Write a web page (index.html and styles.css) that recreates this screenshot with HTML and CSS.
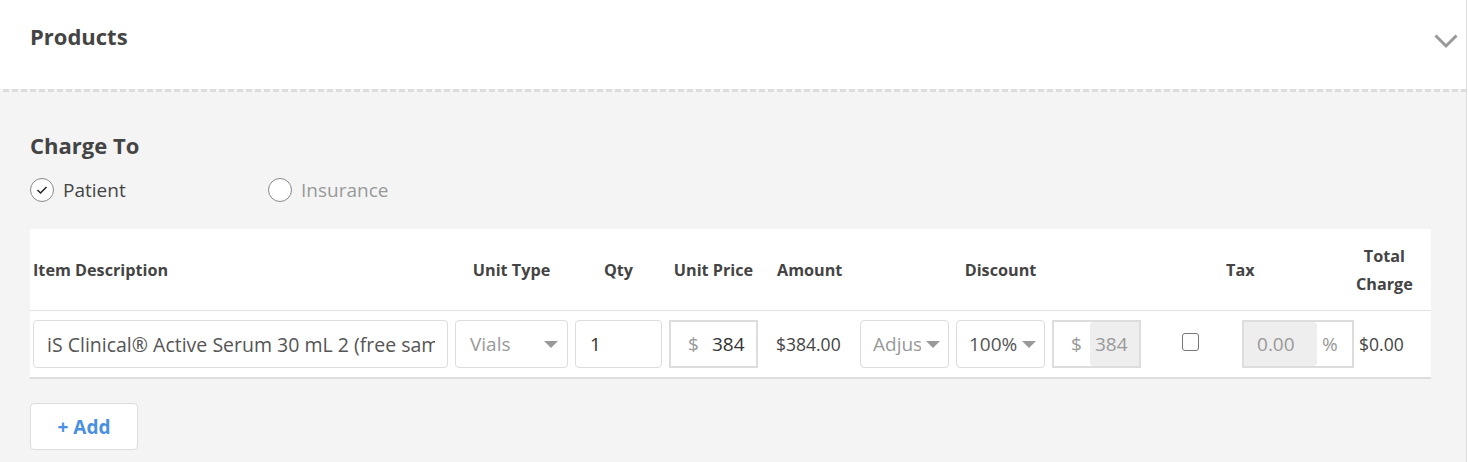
FILE: index.html
```html
<!DOCTYPE html>
<html lang="en">
<head>
  <meta charset="UTF-8">
  <title>Products</title>
  <meta name="viewport" content="width=device-width,initial-scale=1">
  <link rel="stylesheet" href="styles.css">
</head>
<body>
  <div class="panel">
    <div class="panel-head">
      <h2>Products</h2>
      <svg class="chevron" width="24" height="16" viewBox="0 0 24 16">
        <polyline points="1.5,2.5 12,13 22.5,2.5" fill="none" stroke="#999" stroke-width="3"/>
      </svg>
    </div>
    <div class="dashes"></div>

    <div class="panel-body">
      <h3>Charge To</h3>
      <div class="charge-options">
        <label class="radio checked">
          <span class="circle">
            <svg width="12" height="10" viewBox="0 0 12 10">
              <polyline points="1.5,5 4.5,8 10.5,2" fill="none" stroke="#222" stroke-width="1.5"/>
            </svg>
          </span>
          Patient
        </label>
        <label class="radio">
          <span class="circle"></span>
          Insurance
        </label>
      </div>

      <table class="items">
        <colgroup>
          <col style="width:422px"><col style="width:120px"><col style="width:94px">
          <col style="width:96px"><col style="width:95px"><col style="width:96px">
          <col style="width:96px"><col style="width:96px"><col style="width:94px">
          <col style="width:119px"><col>
        </colgroup>
        <thead>
          <tr>
            <th class="left">Item Description</th>
            <th>Unit Type</th>
            <th>Qty</th>
            <th>Unit Price</th>
            <th class="left amount-col">Amount</th>
            <th colspan="3">Discount</th>
            <th colspan="2" class="left tax-head">Tax</th>
            <th class="left"><span class="total-label">Total<br>Charge</span></th>
          </tr>
        </thead>
        <tbody>
          <tr>
            <td><input class="field desc" type="text" value="iS Clinical® Active Serum 30 mL 2 (free sample)"></td>
            <td><div class="select placeholder unit-type"><span>Vials</span><i class="caret"></i></div></td>
            <td><input class="field qty" type="text" value="1"></td>
            <td>
              <div class="group">
                <span class="addon">$</span>
                <input class="group-input" type="text" value="384">
              </div>
            </td>
            <td class="amount-col money">$384.00</td>
            <td><div class="select placeholder small"><span>Adjustment</span><i class="caret"></i></div></td>
            <td><div class="select small"><span>100%</span><i class="caret"></i></div></td>
            <td>
              <div class="group">
                <span class="addon">$</span>
                <input class="group-input disabled" type="text" value="384" disabled>
              </div>
            </td>
            <td class="check-cell"><input class="check" type="checkbox"></td>
            <td>
              <div class="group tax">
                <input class="group-input disabled tax-input" type="text" value="0.00" disabled>
                <span class="addon pct">%</span>
              </div>
            </td>
            <td class="money total">$0.00</td>
          </tr>
        </tbody>
      </table>

      <button class="add-btn">+ Add</button>
    </div>
  </div>
</body>
</html>
```

FILE: styles.css
```css
body { margin: 0; background: #fff; font-family: "Open Sans", Lato, sans-serif; color: #444; }

.panel { width: 1466px; border-right: 1px solid #ddd; background: #f4f4f4; height: 462px; }

.panel-head {
  height: 89px; background: #fff;
  display: flex; align-items: flex-start; justify-content: space-between;
  padding: 0 8px 0 30px; box-sizing: border-box;
}
.panel-head h2 { margin: 21px 0 0; font-size: 22px; line-height: 30px; font-weight: 700; color: #444; }
.chevron { margin-top: 33px; }

.dashes {
  height: 3px; background: repeating-linear-gradient(90deg, transparent 0 3px, #ddd 3px 9px);
}

.panel-body { padding: 0 0 0 30px; }
.panel-body h3 { margin: 0; padding-top: 38px; font-size: 22px; line-height: 30px; font-weight: 700; color: #444; }

.charge-options { display: flex; margin-top: 18px; height: 24px; align-items: center; }
.radio { display: flex; align-items: center; font-size: 19px; color: #444; width: 238px; }
.radio .circle {
  width: 22px; height: 22px; border: 1px solid #888; border-radius: 50%; background: #fff;
  display: flex; align-items: center; justify-content: center; margin-right: 9px;
}
.radio:not(.checked) { color: #999; }

table.items {
  margin-top: 27px; width: 1401px; border-collapse: collapse; table-layout: fixed;
  background: #fff;
}
.items th {
  height: 81px; padding: 0 4px 0 3px; font-size: 16.2px; font-weight: 700; color: #444;
  text-align: center; line-height: 28px; border-bottom: 1px solid #e2e2e2;
}
.items th.left { text-align: left; }
.items th.amount-col { padding-left: 15px; }
.items th.tax-head { padding-left: 81px; }
.total-label { display: inline-block; text-align: center; margin-left: -5px; }

.items td { height: 66px; padding: 0 4px 0 3px; border-bottom: 2px solid #ddd; vertical-align: middle; }
.items td.amount-col { padding-left: 14px; }
.money { font-size: 17.5px; color: #444; }
.items td.total { padding-left: 1px; }

.field {
  width: 100%; height: 48px; box-sizing: border-box; border: 1px solid #ddd; border-radius: 4px;
  padding: 0 12px 0 13px; font: 19px "Open Sans", sans-serif; color: #555; outline: none;
}
.field.desc { font-size: 19.5px; }
.field.qty { color: #333; padding-left: 14px; }

.select {
  height: 48px; box-sizing: border-box; border: 1px solid #ddd; border-radius: 4px; background: #fff;
  display: flex; align-items: center; padding: 0 9px 0 14px; font-size: 19px; color: #555;
}
.select span { flex: 1; overflow: hidden; white-space: nowrap; }
.select.placeholder { color: #999; }
.select.small { padding-right: 8px; padding-left: 12px; }
.caret {
  width: 0; height: 0; border-left: 7px solid transparent; border-right: 7px solid transparent;
  border-top: 7px solid #999; margin-left: 5px;
}

.group {
  height: 48px; box-sizing: border-box; border: 2px solid #ddd; display: flex; align-items: stretch;
  font-size: 19px; background: #fff;
}
.addon { width: 36px; flex: none; padding-left: 17px; box-sizing: border-box; color: #999; display: flex; align-items: center; }
.group-input {
  flex: 1; min-width: 0; border: 0; padding: 0 0 0 5px; font: 19px "Open Sans", sans-serif; color: #333;
  background: transparent; outline: none;
}
.group-input.disabled { background: #eee; color: #999; border-radius: 4px 0 0 4px; }
.tax .tax-input { flex: none; width: 73px; box-sizing: border-box; padding-left: 13px; border-radius: 0 4px 4px 0; }
.addon.pct { padding-left: 5px; }

.check-cell { text-align: center; }
.check {
  appearance: none; display: block; width: 17px; height: 18px; margin: -4px auto 0 34px;
  border: 1.5px solid #777; border-radius: 3px; background: #fff;
}

.add-btn {
  margin-top: 24px; width: 108px; height: 47px; background: #fff; border: 1px solid #ddd; border-radius: 4px;
  font: 700 19px "Open Sans", sans-serif; color: #4a90e2;
}
```
